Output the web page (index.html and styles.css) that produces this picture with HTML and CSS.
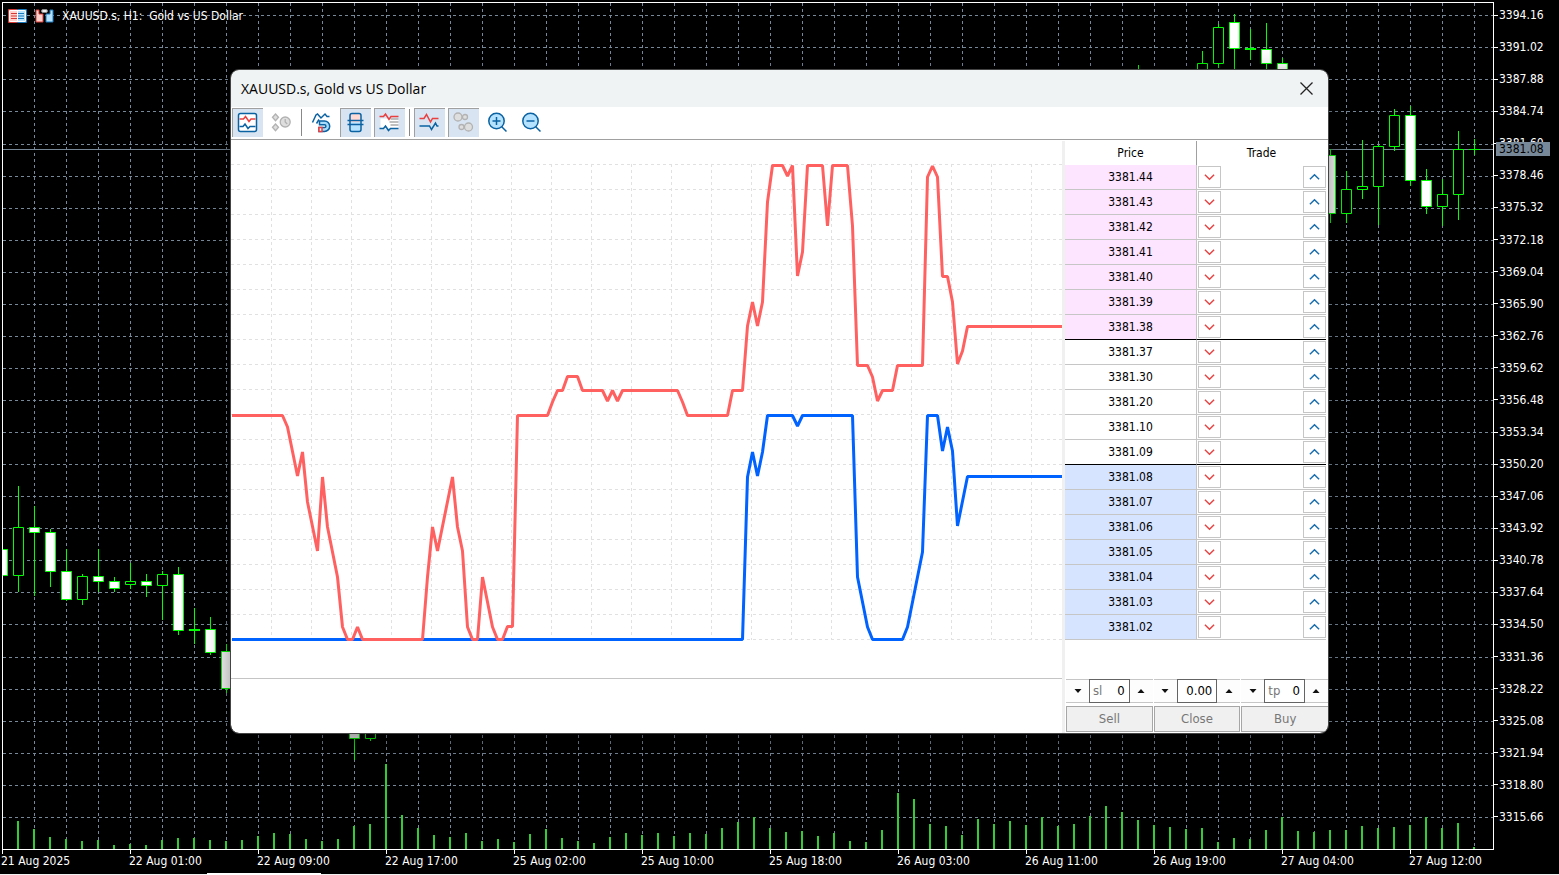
FILE: index.html
```html
<!DOCTYPE html>
<html lang="en">
<head>
<meta charset="utf-8">
<title>XAUUSD.s, Gold vs US Dollar</title>
<link rel="stylesheet" href="styles.css">
</head>
<body>
<svg class="defs" aria-hidden="true">
  <symbol id="down" viewBox="0 0 12 12"><path d="M1 3.5 6 8.5l5-5" fill="none" stroke="#e64545" stroke-width="1.6"/></symbol>
  <symbol id="up" viewBox="0 0 12 12"><path d="M1 8.5 6 3.5l5 5" fill="none" stroke="#1a6eb0" stroke-width="1.6"/></symbol>
  <symbol id="less" viewBox="0 0 8 4"><path d="M0.5 0h7L4 4z" fill="#111"/></symbol>
  <symbol id="more" viewBox="0 0 8 4"><path d="M0.5 4h7L4 0z" fill="#111"/></symbol>
</svg>
<main class="terminal">
  <section class="chart">
    <svg class="chart-canvas" aria-hidden="true">
      <g transform="translate(-3 -3)">
        <path class="grid" d="M3 15.5H1494M3 47.5H1494M3 79.5H1494M3 111.5H1494M3 144.5H1494M3 176.5H1494M3 208.5H1494M3 240.5H1494M3 272.5H1494M3 304.5H1494M3 336.5H1494M3 368.5H1494M3 400.5H1494M3 432.5H1494M3 464.5H1494M3 496.5H1494M3 528.5H1494M3 560.5H1494M3 592.5H1494M3 624.5H1494M3 657.5H1494M3 689.5H1494M3 721.5H1494M3 753.5H1494M3 785.5H1494M3 817.5H1494"/>
        <path class="grid" d="M34.5 3V849M66.5 3V849M98.5 3V849M130.5 3V849M162.5 3V849M194.5 3V849M226.5 3V849M258.5 3V849M290.5 3V849M322.5 3V849M354.5 3V849M386.5 3V849M418.5 3V849M450.5 3V849M482.5 3V849M514.5 3V849M546.5 3V849M578.5 3V849M610.5 3V849M642.5 3V849M674.5 3V849M706.5 3V849M738.5 3V849M770.5 3V849M802.5 3V849M834.5 3V849M866.5 3V849M898.5 3V849M930.5 3V849M962.5 3V849M994.5 3V849M1026.5 3V849M1058.5 3V849M1090.5 3V849M1122.5 3V849M1154.5 3V849M1186.5 3V849M1218.5 3V849M1250.5 3V849M1282.5 3V849M1314.5 3V849M1346.5 3V849M1378.5 3V849M1410.5 3V849M1442.5 3V849M1474.5 3V849"/>
        <path class="volume" d="M18 849V821M34 849V829M50 849V837M66 849V839M82 849V841M98 849V840M114 849V845M130 849V844M146 849V845M162 849V840M178 849V838M194 849V838M210 849V840M226 849V841M242 849V840M258 849V836M274 849V833M290 849V834M306 849V839M322 849V841M338 849V839M354 849V826M370 849V824M386 849V764M402 849V815M418 849V828M434 849V835M450 849V837M466 849V833M482 849V841M498 849V839M514 849V842M530 849V834M546 849V829M562 849V838M578 849V841M594 849V843M610 849V837M626 849V833M642 849V835M658 849V833M674 849V836M690 849V833M706 849V834M722 849V828M738 849V822M754 849V817M770 849V828M786 849V832M802 849V831M818 849V836M834 849V833M850 849V841M866 849V842M882 849V830M898 849V793M914 849V799M930 849V824M946 849V826M962 849V835M978 849V819M994 849V824M1010 849V821M1026 849V825M1042 849V817M1058 849V826M1074 849V824M1090 849V816M1106 849V806M1122 849V812M1138 849V820M1154 849V825M1170 849V827M1186 849V829M1202 849V828M1218 849V842M1234 849V838M1250 849V839M1266 849V830M1282 849V817M1298 849V831M1314 849V832M1330 849V830M1346 849V830M1362 849V826M1378 849V828M1394 849V827M1410 849V825M1426 849V817M1442 849V828M1458 849V823M1474 849V847"/>
        <path class="bid" d="M3 149.5H1494"/>
        <path class="candle" d="M18.5 486V592M34.5 506V596M50.5 529V587M66.5 549V601M82.5 574V605M98.5 549V592M114.5 577V592M130.5 563V589M146.5 574V597M162.5 571V620M178.5 567V635M194.5 608V644M210.5 617V655M226.5 644V693M354.5 720V760M370.5 720V741M1138.5 65V80M1202.5 51V80M1218.5 24V68M1234.5 14V80M1250.5 29V60M1266.5 23V80M1282.5 58V80M1330.5 149V223M1346.5 171V223M1362.5 140V199M1378.5 145V225M1394.5 109V151M1410.5 106V186M1426.5 169V214M1442.5 179V226M1458.5 131V220M1474.5 139V155M1469 149.5H1480"/>
        <path class="candle doji" d="M189 630H200M1245 49H1256"/>
        <path class="candle hollow" d="M13.5 527.5h10v48h-10zM77.5 576.5h10v23h-10zM125.5 581.5h10v3h-10zM157.5 574.5h10v11h-10zM365.5 720.5h10v18h-10zM1197.5 63.5h10v20h-10zM1213.5 27.5h10v36h-10zM1341.5 189.5h10v24h-10zM1357.5 186.5h10v3h-10zM1373.5 146.5h10v40h-10zM1389.5 115.5h10v31h-10zM1437.5 194.5h10v12h-10zM1453.5 149.5h10v45h-10z"/>
        <path class="candle solid" d="M-2.5 549.5h10v26h-10zM29.5 527.5h10v5h-10zM45.5 532.5h10v39h-10zM61.5 571.5h10v28h-10zM93.5 576.5h10v5h-10zM109.5 581.5h10v7h-10zM141.5 581.5h10v4h-10zM173.5 574.5h10v56h-10zM205.5 629.5h10v23h-10zM221.5 651.5h10v37h-10zM349.5 720.5h10v18h-10zM1229.5 22.5h10v26h-10zM1261.5 49.5h10v14h-10zM1277.5 63.5h10v20h-10zM1325.5 155.5h10v58h-10zM1405.5 115.5h10v65h-10zM1421.5 180.5h10v26h-10z"/>
      </g>
    </svg>
    <header class="chart-head">
      <svg width="19" height="14" viewBox="0 0 19 14" aria-hidden="true">
        <rect width="10" height="14" rx="1" fill="#d63a34"/><rect x="9" width="10" height="14" rx="1" fill="#1879bd"/>
        <path d="M2 2H9V12H2z" fill="#ffd0cc"/><path d="M10 2h7v10h-7z" fill="#b5e2ff"/>
        <path d="M1.500 1.500H17.500V12.500H1.500zM9.500 1V13" fill="none" stroke="#fff"/>
        <path d="M3 4.500h6M3 7h6M3 9.500h6" stroke="#d63a34"/><path d="M10 4.500h6M10 7h6M10 9.500h6" stroke="#1879bd"/>
      </svg>
      <svg width="19" height="14" viewBox="0 0 19 14" aria-hidden="true">
        <path d="M1 1h3v4h4v8H1z" fill="#ffd0cc" stroke="#d63a34"/>
        <path d="M18 1h-3v4h-4v8h7z" fill="#b5e2ff" stroke="#1879bd"/>
        <rect x="6.500" y=".5" width="6" height="3" rx="1.500" fill="#eee" stroke="#888"/>
      </svg>
      <h1 class="chart-title">XAUUSD.s, H1:&nbsp; Gold vs US Dollar</h1>
    </header>
  </section>
  <aside class="price-axis">
    <ol class="price-scale">
      <li>3394.16</li><li>3391.02</li><li>3387.88</li><li>3384.74</li><li>3381.60</li><li>3378.46</li><li>3375.32</li><li>3372.18</li><li>3369.04</li><li>3365.90</li><li>3362.76</li><li>3359.62</li><li>3356.48</li><li>3353.34</li><li>3350.20</li><li>3347.06</li><li>3343.92</li><li>3340.78</li><li>3337.64</li><li>3334.50</li><li>3331.36</li><li>3328.22</li><li>3325.08</li><li>3321.94</li><li>3318.80</li><li>3315.66</li>
    </ol>
    <output class="price-tag">3381.08</output>
  </aside>
  <ol class="time-axis">
    <li>21 Aug 2025</li><li>22 Aug 01:00</li><li>22 Aug 09:00</li><li>22 Aug 17:00</li><li>25 Aug 02:00</li><li>25 Aug 10:00</li><li>25 Aug 18:00</li><li>26 Aug 03:00</li><li>26 Aug 11:00</li><li>26 Aug 19:00</li><li>27 Aug 04:00</li><li>27 Aug 12:00</li>
  </ol>
  <div class="tab-strip"><div class="tab-active"></div></div>
</main>

<section class="dialog" role="dialog" aria-labelledby="dialog-title">
  <header class="dialog-head">
    <h2 class="dialog-title" id="dialog-title">XAUUSD.s, Gold vs US Dollar</h2>
    <button class="close" aria-label="Close window"><svg width="13" height="13" viewBox="0 0 13 13"><path d="M.5.5l12 12M12.500.5l-12 12" stroke="#222" stroke-width="1.300"/></svg></button>
  </header>
  <div class="toolbar" role="toolbar" aria-label="Depth of market">
    <button class="tool on" aria-label="Tick chart"><svg class="icon" viewBox="0.5 0.5 20 20"><rect x="1" y="1" width="18" height="18" rx="2" fill="#fff" class="ink"/><path class="red" d="M2 6.500h4l2-2.500 3.500 5 2-2.500H18"/><path class="ink" d="M2 14h3.500l2-2.500 3 4.500 2-2H18"/></svg></button>
    <button class="tool" aria-label="Time and sales"><svg class="icon" viewBox="0.5 0.5 20 20"><g class="gray"><path d="M4 1.500 7 4.800 4 8.200 1 4.800zM4 11.500l3 3.300-3 3.400-3-3.400z"/><circle cx="13.700" cy="9.500" r="5"/><path d="M13.700 6.500v3l2 2"/></g></svg></button>
    <span class="sep"></span>
    <button class="tool" aria-label="Snap to price"><svg class="icon" viewBox="0.5 0.5 20 20"><path class="ink" d="M1 10 4.500 2.500 6 1.500l3.500 4 4-4 2 2.500H18M5 11l2.500-4"/><path class="ink" fill="#a9dcfb" d="M8 8.500h5a5.200 5.200 0 0 1 0 10.400H7.500v-3.800H13a1.400 1.400 0 0 0 0-2.800H8z"/><path class="red" fill="#fff" d="M7.500 15.100h3v3.800h-3z"/></svg></button>
    <button class="tool on" aria-label="Compact levels"><svg class="icon" viewBox="0.5 0.5 20 20"><path fill="#ffd9d4" d="M5 9.500V3a2 2 0 0 1 2-2h6a2 2 0 0 1 2 2v6.500z"/><path fill="#b5e2ff" d="M5 10h10v7a2 2 0 0 1-2 2H7a2 2 0 0 1-2-2z"/><rect class="ink" x="4.500" y="1" width="11" height="18" rx="2"/><path class="ink" d="M2 8H18M2 12H18"/></svg></button>
    <button class="tool on" aria-label="Spread levels"><svg class="icon" viewBox="0.5 0.5 20 20"><path fill="#fff" d="M1 6h18v10H1z"/><path d="M11 6.500h8M10 9.500h9M11 12.500h8" stroke="#aaa" fill="none"/><path class="red" d="M0 4h4l2-2.500 3.500 5.500 2-3H19"/><path class="ink" d="M0 16h4l2-2.500 3 4.500 2-2H19"/></svg></button>
    <span class="sep"></span>
    <button class="tool on" aria-label="Bid and ask lines"><svg class="icon" viewBox="0.5 0.5 20 20"><path class="red" d="M0 6h4.500l2.500-4 4 7.500L13 6h6"/><path class="ink" d="M0 13.500h10l2 3.500 4-6.500 1.500 3H19"/></svg></button>
    <button class="tool on" aria-label="Deals"><svg class="icon" viewBox="0.5 0.5 20 20"><g class="gray"><circle cx="4.500" cy="4.500" r="4"/><circle cx="11.500" cy="4.500" r="2.500"/><circle cx="8" cy="14.500" r="2.500"/><circle cx="15" cy="14.500" r="4"/></g></svg></button>
    <button class="tool" aria-label="Zoom in"><svg class="icon" viewBox="0.5 0.5 20 20"><path class="ink" d="M14 14l5 5"/><circle class="ink" fill="#b5e2ff" cx="9" cy="8.500" r="7.700"/><path class="ink" d="M5 8.500h8M9 4.500v8"/></svg></button>
    <button class="tool" aria-label="Zoom out"><svg class="icon" viewBox="0.5 0.5 20 20"><path class="ink" d="M14 14l5 5"/><circle class="ink" fill="#b5e2ff" cx="9" cy="8.500" r="7.700"/><path class="ink" d="M5 8.500h8"/></svg></button>
  </div>
  <div class="dialog-body">
    <div class="ticks">
      <svg class="tick-canvas" aria-hidden="true">
        <g transform="translate(-231 -140)">
          <path class="tick-grid" d="M231 164.500H1062M231 189.500H1062M231 214.500H1062M231 239.500H1062M231 264.500H1062M231 289.500H1062M231 314.500H1062M231 339.500H1062M231 364.500H1062M231 389.500H1062M231 414.500H1062M231 439.500H1062M231 464.500H1062M231 489.500H1062M231 514.500H1062M231 539.500H1062M231 564.500H1062M231 589.500H1062M231 614.500H1062M231 639.500H1062"/>
          <path class="tick-grid" d="M271.500 164V640M311.500 164V640M351.500 164V640M391.500 164V640M431.500 164V640M471.500 164V640M511.500 164V640M551.500 164V640M591.500 164V640M631.500 164V640M671.500 164V640M711.500 164V640M751.500 164V640M791.500 164V640M831.500 164V640M871.500 164V640M911.500 164V640M951.500 164V640M991.500 164V640M1031.500 164V640"/>
          <polyline class="bid-line" points="232,639.5 742.5,639.5 747.5,477 752.5,452 757.5,476 762.5,452 767.5,415.5 792.5,415.5 797.5,426 802.5,415.5 852.5,415.5 857.5,577 867.5,627 872.5,639.5 902.5,639.5 907.5,627 922.5,552 927.5,415.5 937.5,415.5 942.5,451 947.5,427 952.5,451 957.5,526 967.5,476.5 1062,476.5"/>
          <polyline class="ask-line" points="232,415.5 282.5,415.5 287.5,427 297.5,476 302.5,452 307.5,502 317.5,551 322.5,477 327.5,527 337.5,577 342.5,627 347.5,639.5 352.5,639.5 357.5,627 362.5,639.5 422.5,639.5 427.5,577 432.5,527 437.5,551 452.5,477 457.5,527 462.5,551 467.5,627 472.5,639.5 477.5,639.5 482.5,577 492.5,627 497.5,639.5 502.5,639.5 507.5,626.5 512.5,626.5 517.5,415.5 547.5,415.5 552.5,402 557.5,390.5 562.5,390.5 567.5,376.5 577.5,376.5 582.5,390.5 602.5,390.5 607.5,401 612.5,390.5 617.5,401 622.5,390.5 677.5,390.5 682.5,402 687.5,415.5 727.5,415.5 732.5,390.5 742.5,390.5 747.5,326 752.5,302 757.5,326 762.5,302 767.5,202 772.5,165.5 782.5,165.5 787.5,176 792.5,165.5 797.5,276 802.5,252 807.5,165.5 822.5,165.5 827.5,226 832.5,165.5 847.5,165.5 852.5,226 857.5,365.5 867.5,365.5 872.5,377 877.5,401 882.5,390.5 892.5,390.5 897.5,365.5 922.5,365.5 927.5,177 932.5,166 937.5,177 942.5,276.5 947.5,276.5 952.5,302 957.5,364 962.5,351 967.5,326.5 1062,326.5"/>
        </g>
      </svg>
      <div class="tick-volume"></div>
    </div>
    <div class="depth">
      <table class="levels">
        <thead><tr><th class="price">Price</th><th>Trade</th></tr></thead>
        <tbody class="asks">
          <tr><td class="price">3381.44</td><td><div class="actions"><button class="act" aria-label="Sell at 3381.44"><svg class="chev"><use href="#down"/></svg></button><button class="act" aria-label="Buy at 3381.44"><svg class="chev"><use href="#up"/></svg></button></div></td></tr>
          <tr><td class="price">3381.43</td><td><div class="actions"><button class="act" aria-label="Sell at 3381.43"><svg class="chev"><use href="#down"/></svg></button><button class="act" aria-label="Buy at 3381.43"><svg class="chev"><use href="#up"/></svg></button></div></td></tr>
          <tr><td class="price">3381.42</td><td><div class="actions"><button class="act" aria-label="Sell at 3381.42"><svg class="chev"><use href="#down"/></svg></button><button class="act" aria-label="Buy at 3381.42"><svg class="chev"><use href="#up"/></svg></button></div></td></tr>
          <tr><td class="price">3381.41</td><td><div class="actions"><button class="act" aria-label="Sell at 3381.41"><svg class="chev"><use href="#down"/></svg></button><button class="act" aria-label="Buy at 3381.41"><svg class="chev"><use href="#up"/></svg></button></div></td></tr>
          <tr><td class="price">3381.40</td><td><div class="actions"><button class="act" aria-label="Sell at 3381.40"><svg class="chev"><use href="#down"/></svg></button><button class="act" aria-label="Buy at 3381.40"><svg class="chev"><use href="#up"/></svg></button></div></td></tr>
          <tr><td class="price">3381.39</td><td><div class="actions"><button class="act" aria-label="Sell at 3381.39"><svg class="chev"><use href="#down"/></svg></button><button class="act" aria-label="Buy at 3381.39"><svg class="chev"><use href="#up"/></svg></button></div></td></tr>
          <tr class="edge"><td class="price">3381.38</td><td><div class="actions"><button class="act" aria-label="Sell at 3381.38"><svg class="chev"><use href="#down"/></svg></button><button class="act" aria-label="Buy at 3381.38"><svg class="chev"><use href="#up"/></svg></button></div></td></tr>
        </tbody>
        <tbody>
          <tr><td class="price">3381.37</td><td><div class="actions"><button class="act" aria-label="Sell at 3381.37"><svg class="chev"><use href="#down"/></svg></button><button class="act" aria-label="Buy at 3381.37"><svg class="chev"><use href="#up"/></svg></button></div></td></tr>
          <tr><td class="price">3381.30</td><td><div class="actions"><button class="act" aria-label="Sell at 3381.30"><svg class="chev"><use href="#down"/></svg></button><button class="act" aria-label="Buy at 3381.30"><svg class="chev"><use href="#up"/></svg></button></div></td></tr>
          <tr><td class="price">3381.20</td><td><div class="actions"><button class="act" aria-label="Sell at 3381.20"><svg class="chev"><use href="#down"/></svg></button><button class="act" aria-label="Buy at 3381.20"><svg class="chev"><use href="#up"/></svg></button></div></td></tr>
          <tr><td class="price">3381.10</td><td><div class="actions"><button class="act" aria-label="Sell at 3381.10"><svg class="chev"><use href="#down"/></svg></button><button class="act" aria-label="Buy at 3381.10"><svg class="chev"><use href="#up"/></svg></button></div></td></tr>
          <tr class="edge"><td class="price">3381.09</td><td><div class="actions"><button class="act" aria-label="Sell at 3381.09"><svg class="chev"><use href="#down"/></svg></button><button class="act" aria-label="Buy at 3381.09"><svg class="chev"><use href="#up"/></svg></button></div></td></tr>
        </tbody>
        <tbody class="bids">
          <tr><td class="price">3381.08</td><td><div class="actions"><button class="act" aria-label="Sell at 3381.08"><svg class="chev"><use href="#down"/></svg></button><button class="act" aria-label="Buy at 3381.08"><svg class="chev"><use href="#up"/></svg></button></div></td></tr>
          <tr><td class="price">3381.07</td><td><div class="actions"><button class="act" aria-label="Sell at 3381.07"><svg class="chev"><use href="#down"/></svg></button><button class="act" aria-label="Buy at 3381.07"><svg class="chev"><use href="#up"/></svg></button></div></td></tr>
          <tr><td class="price">3381.06</td><td><div class="actions"><button class="act" aria-label="Sell at 3381.06"><svg class="chev"><use href="#down"/></svg></button><button class="act" aria-label="Buy at 3381.06"><svg class="chev"><use href="#up"/></svg></button></div></td></tr>
          <tr><td class="price">3381.05</td><td><div class="actions"><button class="act" aria-label="Sell at 3381.05"><svg class="chev"><use href="#down"/></svg></button><button class="act" aria-label="Buy at 3381.05"><svg class="chev"><use href="#up"/></svg></button></div></td></tr>
          <tr><td class="price">3381.04</td><td><div class="actions"><button class="act" aria-label="Sell at 3381.04"><svg class="chev"><use href="#down"/></svg></button><button class="act" aria-label="Buy at 3381.04"><svg class="chev"><use href="#up"/></svg></button></div></td></tr>
          <tr><td class="price">3381.03</td><td><div class="actions"><button class="act" aria-label="Sell at 3381.03"><svg class="chev"><use href="#down"/></svg></button><button class="act" aria-label="Buy at 3381.03"><svg class="chev"><use href="#up"/></svg></button></div></td></tr>
          <tr><td class="price">3381.02</td><td><div class="actions"><button class="act" aria-label="Sell at 3381.02"><svg class="chev"><use href="#down"/></svg></button><button class="act" aria-label="Buy at 3381.02"><svg class="chev"><use href="#up"/></svg></button></div></td></tr>
        </tbody>
      </table>
      <form class="order">
        <div class="spinner">
          <button type="button" class="step" aria-label="Decrease stop loss"><svg class="arrow"><use href="#less"/></svg></button>
          <div class="field"><label for="sl">sl</label><input id="sl" type="text" value="0"></div>
          <button type="button" class="step" aria-label="Increase stop loss"><svg class="arrow"><use href="#more"/></svg></button>
        </div>
        <div class="spinner">
          <button type="button" class="step" aria-label="Decrease volume"><svg class="arrow"><use href="#less"/></svg></button>
          <div class="field"><input id="lots" type="text" value="0.00" aria-label="Volume"></div>
          <button type="button" class="step" aria-label="Increase volume"><svg class="arrow"><use href="#more"/></svg></button>
        </div>
        <div class="spinner">
          <button type="button" class="step" aria-label="Decrease take profit"><svg class="arrow"><use href="#less"/></svg></button>
          <div class="field"><label for="tp">tp</label><input id="tp" type="text" value="0"></div>
          <button type="button" class="step" aria-label="Increase take profit"><svg class="arrow"><use href="#more"/></svg></button>
        </div>
        <button type="button" class="deal" disabled>Sell</button>
        <button type="button" class="deal" disabled>Close</button>
        <button type="button" class="deal" disabled>Buy</button>
      </form>
    </div>
  </div>
</section>
</body>
</html>
```
FILE: styles.css
```css
* { box-sizing: border-box; }
body {
  margin: 0;
  background: #000;
  overflow: hidden;
  font: 12px/14px "DejaVu Sans Condensed", "DejaVu Sans", sans-serif;
}
h1, h2, ol { margin: 0; padding: 0; font: inherit; list-style: none; }
button, input { font: inherit; margin: 0; padding: 0; }
.defs { display: none; }

/* Price chart */
.terminal {
  display: grid;
  grid-template-columns: 1fr 65px;
  grid-template-rows: 1fr 23px 2px;
  height: 100vh;
  padding-top: 2px;
  color: #fff;
}
.chart {
  display: grid;
  margin-left: 2px;
  border: 1px solid #fff;
  min-width: 0;
  min-height: 0;
}
.chart-canvas, .chart-head { grid-area: 1 / 1; }
.chart-canvas { width: 100%; height: 100%; overflow: hidden; }
.chart-canvas path { fill: none; }
.grid { stroke: #778899; stroke-dasharray: 3 3; }
.bid { stroke: #778899; }
.volume { stroke: #32cd32; stroke-width: 2; }
.candle { stroke: #0f0; }
.doji { stroke-width: 2; }
.chart-canvas .hollow { fill: #000; }
.chart-canvas .solid { fill: #fff; }
.chart-head {
  display: flex;
  align-items: center;
  align-self: start;
  gap: 8px;
  padding: 6px 5px;
}
.price-axis { position: relative; }
.price-scale {
  display: flex;
  flex-direction: column;
  justify-content: space-between;
  height: 822px;
  padding-top: 6px;
}
.price-scale li {
  padding-left: 5px;
  background: linear-gradient(#fff, #fff) 0 50% / 4px 1px no-repeat;
}
.price-tag {
  position: absolute;
  top: 140px;
  left: 2px;
  width: 54px;
  padding-left: 3px;
  background: #778899;
  color: #000;
}
.time-axis { grid-column: 1 / -1; display: flex; padding-left: 2px; }
.time-axis li {
  flex: 0 0 128px;
  padding-top: 4px;
  text-indent: -1px;
  background: linear-gradient(#fff, #fff) 0 0 / 1px 4px no-repeat;
}
.tab-strip {
  grid-column: 1 / -1;
  padding-left: 207px;
  background: linear-gradient(#f0f0f0, #f0f0f0) 0 100% / 100% 1px no-repeat;
}
.tab-active { width: 114px; height: 2px; background: #fff; }

/* Depth of market window */
.dialog {
  position: absolute;
  top: 70px;
  left: 231px;
  width: 1097px;
  display: flex;
  flex-direction: column;
  overflow: hidden;
  border-radius: 8px;
  outline: 1px solid #444;
  background: #fff;
  color: #000;
  box-shadow: 0 8px 28px rgba(0, 0, 0, .5);
}
.dialog-head {
  display: flex;
  align-items: center;
  justify-content: space-between;
  height: 37px;
  padding: 0 15px 0 10px;
  background: #eff3f4;
}
.dialog-title { font: 14px/20px "Open Sans", "Noto Sans", sans-serif; }
.close { display: flex; border: 0; background: none; }
.toolbar {
  display: flex;
  gap: 3px;
  padding: 1px 1px 2px;
  border-bottom: 1px solid #a0a0a0;
}
.tool {
  display: flex;
  align-items: center;
  justify-content: center;
  width: 31px;
  height: 29px;
  border: solid transparent;
  border-width: 1px 0 0 1px;
  background: none;
}
.tool.on { border-color: #a0a0a0; background: #d8e4f1; }
.icon { width: 20px; height: 20px; overflow: visible; fill: none; stroke-width: 1.5; }
.ink { stroke: #0a62a2; }
.red { stroke: #ea3f3f; }
.gray { stroke: #b2b2b2; fill: #dedede; stroke-width: 1.3; }
.sep { width: 3px; margin: 1px 0; background: linear-gradient(#888, #888) 50% 0 / 1px 100% no-repeat; }

.dialog-body { display: grid; grid-template-columns: minmax(0, 1fr) 266px; }
.ticks { display: flex; flex-direction: column; min-width: 0; }
.tick-canvas { flex: 1; width: 100%; border-bottom: 1px solid #c4c4c4; }
.tick-grid { fill: none; stroke: #e1e1e1; stroke-dasharray: 3 3; }
.bid-line, .ask-line { fill: none; stroke-width: 3; stroke-linejoin: bevel; }
.bid-line { stroke: #0062ff; }
.ask-line { stroke: #ff6161; }
.tick-volume { height: 54px; }

.depth { min-width: 0; margin-top: 1px; border-left: 3px solid #f0f0f0; }
.levels { width: 261px; border-spacing: 0; table-layout: fixed; }
.levels th, .levels td { height: 25px; padding: 0; text-align: center; }
.levels th { height: 24px; font-weight: normal; }
.levels td { border-bottom: 1px solid #c6c6c6; }
.levels .edge td { border-bottom-color: #000; }
.levels .price { width: 132px; border-right: 1px solid #c6c6c6; }
.levels th.price { border-right-color: #a0a0a0; }
.asks .price { background: #fde4ff; }
.bids .price { background: #d6e4ff; }
.actions { display: flex; justify-content: space-between; padding-left: 1px; }
.act {
  display: flex;
  align-items: center;
  justify-content: center;
  width: 23px;
  height: 22px;
  border: 1px solid #c6c6c6;
  background: #fff;
}
.chev { width: 11px; height: 12px; }

.order {
  display: grid;
  grid-template-columns: repeat(3, minmax(0, 1fr));
  gap: 3px 1px;
  padding: 39px 0 1px 1px;
  font-size: 13px;
}
.spinner {
  display: flex;
  height: 24px;
  border: 1px solid #c6c6c6;
  border-width: 1px 0;
  background: #fdfdfd;
}
.step {
  display: flex;
  flex: 0 0 23px;
  align-items: center;
  justify-content: center;
  border: 0;
  background: none;
}
.arrow { width: 8px; height: 4px; }
.field {
  display: flex;
  flex: 1;
  align-items: center;
  min-width: 0;
  margin: -1px 0;
  padding: 0 4px 0 3px;
  border: 1px solid #646464;
  background: #fff;
}
.field label { color: #777; }
.field input {
  flex: 1;
  width: 0;
  min-width: 0;
  border: 0;
  outline: 0;
  background: none;
  text-align: right;
}
.deal {
  height: 26px;
  border: 1px solid #a6a6a6;
  background: #f0f0f0;
  color: #777;
}
.deal:last-child { border-right: 0; }
```
